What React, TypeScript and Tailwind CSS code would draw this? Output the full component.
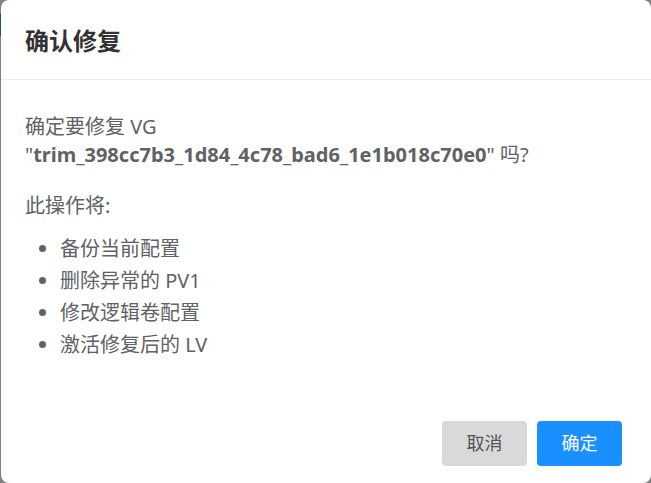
const items = ['备份当前配置', '删除异常的 PV1', '修改逻辑卷配置', '激活修复后的 LV']

export default function App() {
  return (
    <div
      className="w-[651px] h-[483px] bg-[#808080] overflow-hidden relative"
      style={{ fontFamily: '"Noto Sans", "Noto Sans CJK SC", sans-serif' }}
    >
      <div className="absolute left-0 top-[14px] w-[1px] h-[22px] bg-[#1f4e79]" />
      <div className="ml-[1px] w-[650px] h-[483px] bg-white rounded-[8px] flex flex-col">
        <div className="h-[80px] border-b border-[#ebeef5] flex items-center px-[24px] pt-[2px] shrink-0">
          <h2 className="text-[24px] font-bold text-[#333333] leading-none">确认修复</h2>
        </div>
        <div className="h-[320px] px-[24px] pt-[33px] text-[20px] text-[#606266] leading-[28px] shrink-0">
          <p>
            确定要修复 VG
            <br />
            <span>"</span>
            <strong className="font-bold">trim_398cc7b3_1d84_4c78_bad6_1e1b018c70e0</strong>
            <span>" 吗?</span>
          </p>
          <p className="mt-[23px]">此操作将:</p>
          <ul className="mt-[13px] list-disc pl-[35px] marker:text-[#606266]">
            {items.map((t) => (
              <li key={t} className="leading-[32px]">
                {t}
              </li>
            ))}
          </ul>
        </div>
        <div className="flex-1 flex justify-end items-start gap-[10px] pt-[21px] pr-[29px]">
          <button className="w-[85px] h-[45px] rounded-[4px] bg-[#d9d9d9] text-[#555555] text-[18px]">
            取消
          </button>
          <button className="w-[85px] h-[45px] rounded-[4px] bg-[#1890ff] text-white text-[18px]">
            确定
          </button>
        </div>
      </div>
    </div>
  )
}
